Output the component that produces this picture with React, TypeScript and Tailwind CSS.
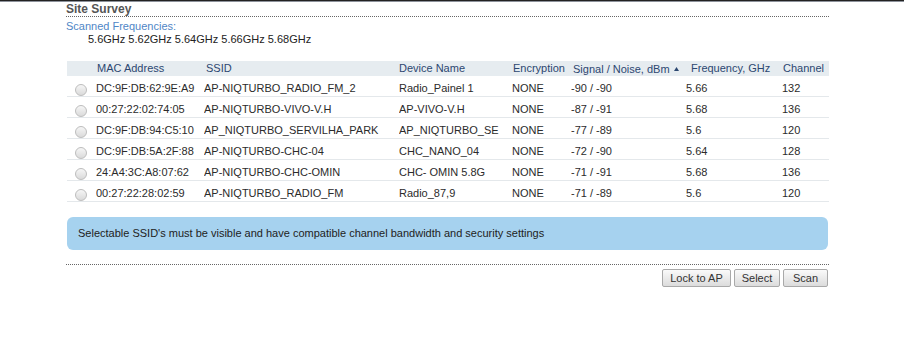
import React from "react";

const rows = [
  ["DC:9F:DB:62:9E:A9", "AP-NIQTURBO_RADIO_FM_2", "Radio_Painel 1", "NONE", "-90 / -90", "5.66", "132"],
  ["00:27:22:02:74:05", "AP-NIQTURBO-VIVO-V.H", "AP-VIVO-V.H", "NONE", "-87 / -91", "5.68", "136"],
  ["DC:9F:DB:94:C5:10", "AP_NIQTURBO_SERVILHA_PARK", "AP_NIQTURBO_SE", "NONE", "-77 / -89", "5.6", "120"],
  ["DC:9F:DB:5A:2F:88", "AP-NIQTURBO-CHC-04", "CHC_NANO_04", "NONE", "-72 / -90", "5.64", "128"],
  ["24:A4:3C:A8:07:62", "AP-NIQTURBO-CHC-OMIN", "CHC- OMIN 5.8G", "NONE", "-71 / -91", "5.68", "136"],
  ["00:27:22:28:02:59", "AP-NIQTURBO_RADIO_FM", "Radio_87,9", "NONE", "-71 / -89", "5.6", "120"],
];

const cols = "grid grid-cols-[29px_108px_195px_113px_59px_115px_96px_47px]";

const buttons: [string, string][] = [
  ["Lock to AP", "w-[69px]"],
  ["Select", "w-[46px]"],
  ["Scan", "w-[45px]"],
];

export default function App() {
  return (
    <div className="w-[904px] h-[342px] bg-white overflow-hidden text-[11px] leading-[13px] text-[#2b2b2b]" style={{ fontFamily: '"Liberation Sans", Arial, sans-serif' }}>
      <div className="h-[1px] bg-[#222]" />
      <div className="h-[1px] bg-[#8d929b]" />
      <div className="ml-[66px] w-[763px]">
        <div className="h-[15px] text-[12px] leading-[14px] font-bold text-[#555] border-b border-dotted border-[#666]">
          Site Survey
        </div>
        <div className="mt-[3px] text-[#4f86c6]">Scanned Frequencies:</div>
        <div className="pl-[22px] text-[#222]">5.6GHz 5.62GHz 5.64GHz 5.66GHz 5.68GHz</div>

        <div className="mt-[15px] ml-[1px] w-[762px]">
          <div className={`${cols} h-[15px] bg-[#e6ecf0] text-[#2c4770] pt-[1px] whitespace-nowrap`}>
            <div />
            <div className="pl-[1px]">MAC Address</div>
            <div className="pl-[2px]">SSID</div>
            <div>Device Name</div>
            <div className="pl-[1px]">Encryption</div>
            <div className="pl-[2px] flex items-center">
              Signal / Noise, dBm
              <svg width="5" height="4" viewBox="0 0 5 4" className="ml-[4px]">
                <path d="M2.5 0L5 4H0z" fill="#2c4770" />
              </svg>
            </div>
            <div className="pl-[5px]">Frequency, GHz</div>
            <div className="pl-[1px]">Channel</div>
          </div>
          {rows.map((r, i) => (
            <div key={i} className={`${cols} h-[21px] border-b border-[#e4e8eb] whitespace-nowrap`}>
              <div className="pl-[8px] pt-[8px]">
                <div className="w-[12px] h-[12px] rounded-full border border-[#bdbdbd] bg-gradient-to-b from-[#f6f6f6] to-[#dadada]" />
              </div>
              {r.map((c, j) => (
                <div key={j} className="pt-[6px] overflow-hidden">
                  {c}
                </div>
              ))}
            </div>
          ))}
        </div>

        <div className="mt-[15px] ml-[1px] w-[761px] h-[33px] rounded-[6px] bg-[#a6d2ef] flex items-center pl-[11px] text-[#222]">
          Selectable SSID's must be visible and have compatible channel bandwidth and security settings
        </div>

        <div className="mt-[14px] border-t border-dotted border-[#666]" />

        <div className="mt-[4px] flex justify-end gap-[3px] pr-[1px]">
          {buttons.map(([b, w]) => (
            <button
              key={b}
              className={`${w} h-[18px] text-[11px] leading-[13px] text-[#333] border border-[#a9a9a9] rounded-[2px] bg-gradient-to-b from-[#fafafa] to-[#dcdcdc]`}
              style={{ fontFamily: '"Liberation Sans", Arial, sans-serif' }}
            >
              {b}
            </button>
          ))}
        </div>
      </div>
    </div>
  );
}
